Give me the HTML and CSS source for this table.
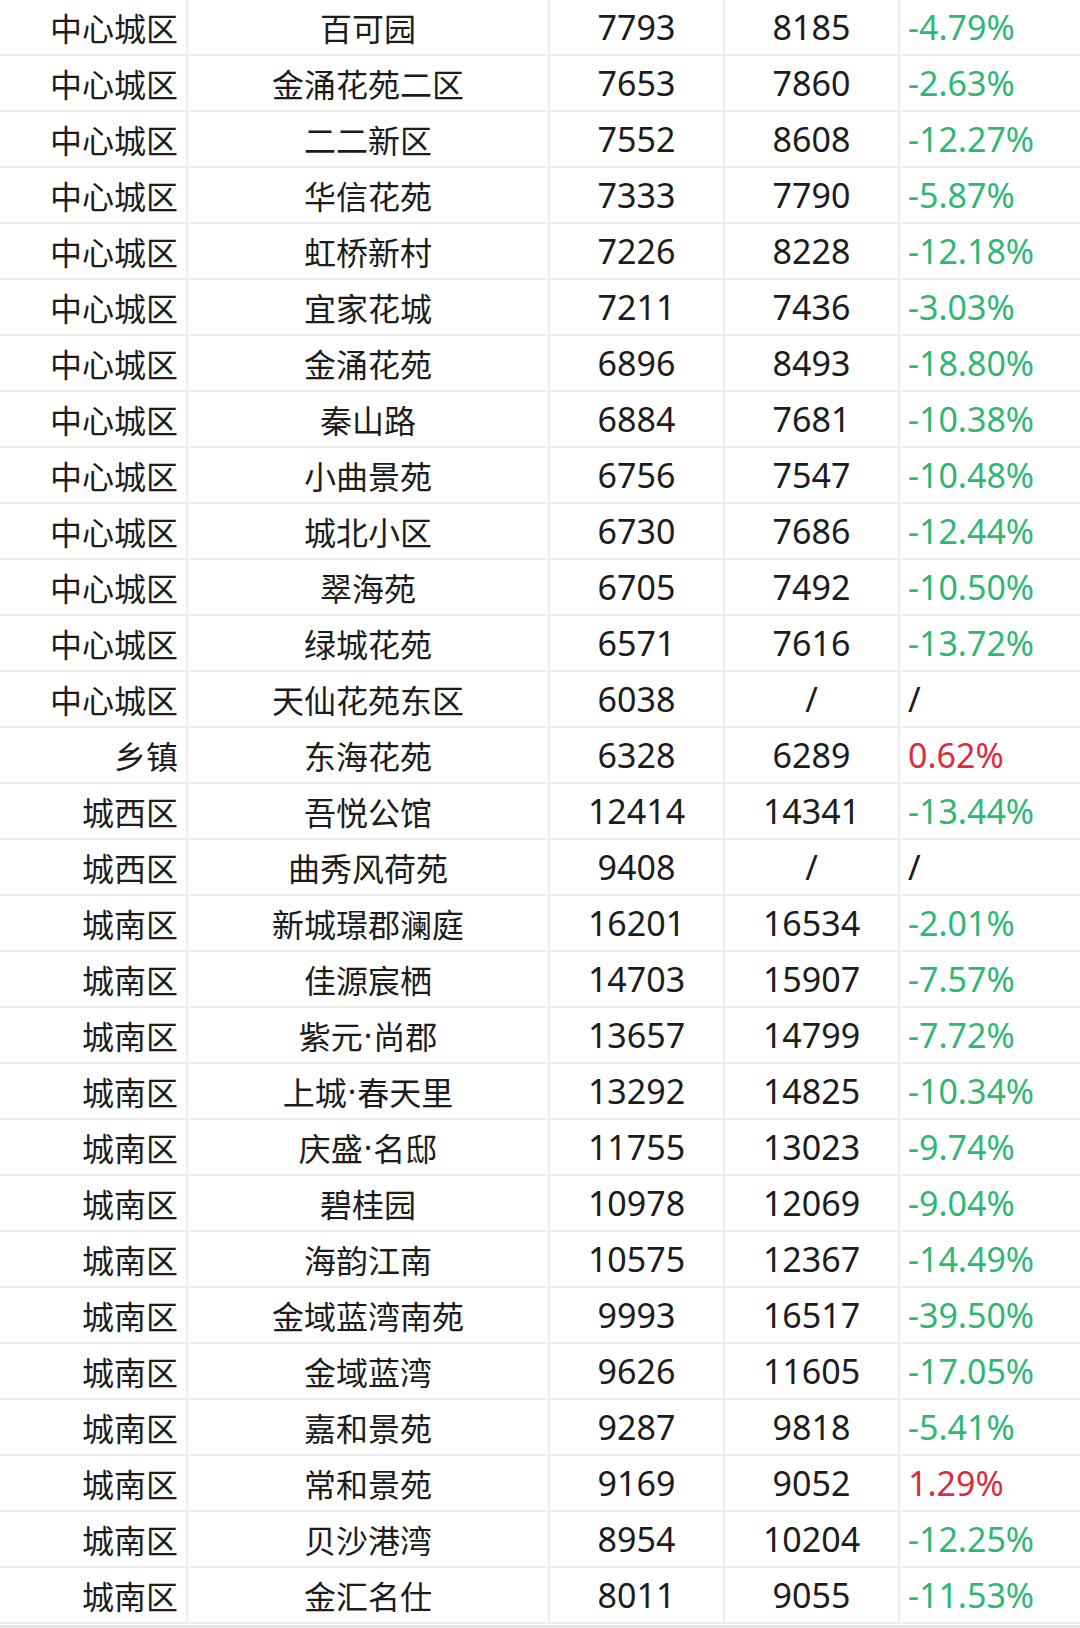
FILE: index.html
```html
<!DOCTYPE html>
<html lang="zh">
<head>
<meta charset="utf-8">
<link rel="stylesheet" href="styles.css">
</head>
<body>
<div class="sheet">
  <div class="row"><span class="c1">中心城区</span><span class="c2">百可园</span><span class="c3">7793</span><span class="c4">8185</span><span class="c5 down">-4.79%</span></div>
  <div class="row"><span class="c1">中心城区</span><span class="c2">金涌花苑二区</span><span class="c3">7653</span><span class="c4">7860</span><span class="c5 down">-2.63%</span></div>
  <div class="row"><span class="c1">中心城区</span><span class="c2">二二新区</span><span class="c3">7552</span><span class="c4">8608</span><span class="c5 down">-12.27%</span></div>
  <div class="row"><span class="c1">中心城区</span><span class="c2">华信花苑</span><span class="c3">7333</span><span class="c4">7790</span><span class="c5 down">-5.87%</span></div>
  <div class="row"><span class="c1">中心城区</span><span class="c2">虹桥新村</span><span class="c3">7226</span><span class="c4">8228</span><span class="c5 down">-12.18%</span></div>
  <div class="row"><span class="c1">中心城区</span><span class="c2">宜家花城</span><span class="c3">7211</span><span class="c4">7436</span><span class="c5 down">-3.03%</span></div>
  <div class="row"><span class="c1">中心城区</span><span class="c2">金涌花苑</span><span class="c3">6896</span><span class="c4">8493</span><span class="c5 down">-18.80%</span></div>
  <div class="row"><span class="c1">中心城区</span><span class="c2">秦山路</span><span class="c3">6884</span><span class="c4">7681</span><span class="c5 down">-10.38%</span></div>
  <div class="row"><span class="c1">中心城区</span><span class="c2">小曲景苑</span><span class="c3">6756</span><span class="c4">7547</span><span class="c5 down">-10.48%</span></div>
  <div class="row"><span class="c1">中心城区</span><span class="c2">城北小区</span><span class="c3">6730</span><span class="c4">7686</span><span class="c5 down">-12.44%</span></div>
  <div class="row"><span class="c1">中心城区</span><span class="c2">翠海苑</span><span class="c3">6705</span><span class="c4">7492</span><span class="c5 down">-10.50%</span></div>
  <div class="row"><span class="c1">中心城区</span><span class="c2">绿城花苑</span><span class="c3">6571</span><span class="c4">7616</span><span class="c5 down">-13.72%</span></div>
  <div class="row"><span class="c1">中心城区</span><span class="c2">天仙花苑东区</span><span class="c3">6038</span><span class="c4">/</span><span class="c5">/</span></div>
  <div class="row"><span class="c1">乡镇</span><span class="c2">东海花苑</span><span class="c3">6328</span><span class="c4">6289</span><span class="c5 up">0.62%</span></div>
  <div class="row"><span class="c1">城西区</span><span class="c2">吾悦公馆</span><span class="c3">12414</span><span class="c4">14341</span><span class="c5 down">-13.44%</span></div>
  <div class="row"><span class="c1">城西区</span><span class="c2">曲秀风荷苑</span><span class="c3">9408</span><span class="c4">/</span><span class="c5">/</span></div>
  <div class="row"><span class="c1">城南区</span><span class="c2">新城璟郡澜庭</span><span class="c3">16201</span><span class="c4">16534</span><span class="c5 down">-2.01%</span></div>
  <div class="row"><span class="c1">城南区</span><span class="c2">佳源宸栖</span><span class="c3">14703</span><span class="c4">15907</span><span class="c5 down">-7.57%</span></div>
  <div class="row"><span class="c1">城南区</span><span class="c2">紫元<i class="dot">·</i>尚郡</span><span class="c3">13657</span><span class="c4">14799</span><span class="c5 down">-7.72%</span></div>
  <div class="row"><span class="c1">城南区</span><span class="c2">上城<i class="dot">·</i>春天里</span><span class="c3">13292</span><span class="c4">14825</span><span class="c5 down">-10.34%</span></div>
  <div class="row"><span class="c1">城南区</span><span class="c2">庆盛<i class="dot">·</i>名邸</span><span class="c3">11755</span><span class="c4">13023</span><span class="c5 down">-9.74%</span></div>
  <div class="row"><span class="c1">城南区</span><span class="c2">碧桂园</span><span class="c3">10978</span><span class="c4">12069</span><span class="c5 down">-9.04%</span></div>
  <div class="row"><span class="c1">城南区</span><span class="c2">海韵江南</span><span class="c3">10575</span><span class="c4">12367</span><span class="c5 down">-14.49%</span></div>
  <div class="row"><span class="c1">城南区</span><span class="c2">金域蓝湾南苑</span><span class="c3">9993</span><span class="c4">16517</span><span class="c5 down">-39.50%</span></div>
  <div class="row"><span class="c1">城南区</span><span class="c2">金域蓝湾</span><span class="c3">9626</span><span class="c4">11605</span><span class="c5 down">-17.05%</span></div>
  <div class="row"><span class="c1">城南区</span><span class="c2">嘉和景苑</span><span class="c3">9287</span><span class="c4">9818</span><span class="c5 down">-5.41%</span></div>
  <div class="row"><span class="c1">城南区</span><span class="c2">常和景苑</span><span class="c3">9169</span><span class="c4">9052</span><span class="c5 up">1.29%</span></div>
  <div class="row"><span class="c1">城南区</span><span class="c2">贝沙港湾</span><span class="c3">8954</span><span class="c4">10204</span><span class="c5 down">-12.25%</span></div>
  <div class="row"><span class="c1">城南区</span><span class="c2">金汇名仕</span><span class="c3">8011</span><span class="c4">9055</span><span class="c5 down">-11.53%</span></div>
</div>
</body>
</html>
```

FILE: styles.css
```css
html, body {
  margin: 0;
  padding: 0;
  background: #ffffff;
}
body {
  font-family: "Noto Sans CJK SC", "Noto Sans", sans-serif;
  color: #1c1c1c;
  font-size: 32px;
}
.sheet {
  width: 1080px;
  height: 1628px;
  overflow: hidden;
  border-bottom: 3px solid #e4e4e4;
  box-sizing: border-box;
}
.row {
  display: grid;
  grid-template-columns: 188px 362px 175px 175px 1fr;
  height: 56px;
  box-sizing: border-box;
  border-bottom: 2px solid #ececec;
}
.row span {
  display: flex;
  align-items: center;
  box-sizing: border-box;
  border-right: 2px solid #ececec;
  line-height: 1;
  white-space: nowrap;
}
.c1 {
  justify-content: flex-end;
  padding-right: 8px;
}
.c2, .c3, .c4 {
  justify-content: center;
}
.c3, .c4, .c5 {
  font-family: "Noto Sans", "Noto Sans CJK SC", sans-serif;
  font-size: 34px;
}
.dot {
  font-style: normal;
  font-family: "Noto Sans", sans-serif;
  padding: 0 1px;
}
.row .c5 {
  justify-content: flex-start;
  padding-left: 8px;
  border-right: none;
}
.down {
  color: #2fb774;
}
.up {
  color: #dc2b3d;
}
```
